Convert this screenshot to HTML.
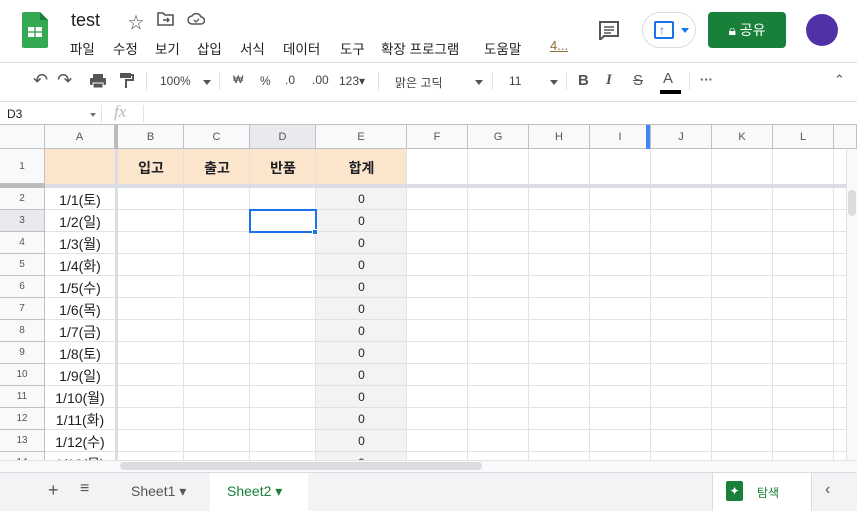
<!DOCTYPE html>
<html><head><meta charset="utf-8"><style>
*{box-sizing:border-box;margin:0;padding:0}
body{width:857px;height:511px;overflow:hidden;background:#fff;font-family:"Liberation Sans","Noto Sans CJK KR",sans-serif;position:relative;color:#202124}
.a{position:absolute}
.m{position:absolute;top:38px;font-size:13.5px;white-space:nowrap}
.tb{color:#444;font-size:12px}
.vl{position:absolute;width:1px;background:#e2e2e2}
.hl{position:absolute;height:1px;background:#e2e2e2}
.ch{position:absolute;top:125px;height:24px;font-size:11px;color:#555;text-align:center;line-height:24px;background:#f8f9fa;border-right:1px solid #c0c0c0;border-bottom:1px solid #c0c0c0}
.rh{position:absolute;left:0;width:45px;font-size:10px;color:#555;text-align:center;background:#f8f9fa;border-right:1px solid #c0c0c0;border-bottom:1px solid #c0c0c0}
.cell{position:absolute;font-size:14px;text-align:center}
</style></head><body>
<svg class="a" style="left:22px;top:12px" width="26" height="36" viewBox="0 0 26 36"><path d="M2 0h16l8 8v26a2 2 0 0 1-2 2H2a2 2 0 0 1-2-2V2a2 2 0 0 1 2-2z" fill="#34a853"/><path d="M18 0v8h8z" fill="#188038"/><rect x="6" y="15" width="14" height="10" fill="#fff"/><rect x="12.3" y="15" width="1.4" height="10" fill="#34a853"/><rect x="6" y="19.3" width="14" height="1.4" fill="#34a853"/></svg>
<div class="a" style="left:71px;top:10px;font-size:18px">test</div>
<div class="a" style="left:128px;top:9px;font-size:16px;color:#555">☆</div>
<svg class="a" style="left:157px;top:12px" width="18" height="14"><path d="M1 1h5l2 2h8v10H1z" fill="none" stroke="#555" stroke-width="1.6"/><path d="M6 8h6M10 6l2 2-2 2" stroke="#555" stroke-width="1.4" fill="none"/></svg>
<svg class="a" style="left:187px;top:12px" width="18" height="14"><path d="M5 12a4 4 0 0 1 0-8 5 5 0 0 1 9 1 3.5 3.5 0 0 1 0 7z" fill="none" stroke="#555" stroke-width="1.5"/><path d="M7 8l2 2 3-3" stroke="#555" stroke-width="1.3" fill="none"/></svg>
<div class="m" style="left:70px">파일</div><div class="m" style="left:113px">수정</div><div class="m" style="left:155px">보기</div><div class="m" style="left:197px">삽입</div><div class="m" style="left:240px">서식</div><div class="m" style="left:283px">데이터</div><div class="m" style="left:340px">도구</div><div class="m" style="left:381px">확장 프로그램</div><div class="m" style="left:484px">도움말</div><div class="m" style="left:550px;color:#8a6d3b;text-decoration:underline;font-size:13px">4...</div>
<svg class="a" style="left:598px;top:20px" width="22" height="20"><path d="M2 2h18v14H6l-4 4z" fill="none" stroke="#555" stroke-width="2"/><path d="M6 7h10M6 10h10M6 13h7" stroke="#555" stroke-width="1.5"/></svg>
<div class="a" style="left:642px;top:12px;width:54px;height:36px;border:1px solid #dadce0;border-radius:18px"></div>
<div class="a" style="left:654px;top:21px;width:20px;height:18px;border:2px solid #1a73e8;border-radius:2px"></div>
<div class="a" style="left:659px;top:23px;color:#1a73e8;font-size:12px;font-weight:bold">↑</div>
<div class="a" style="left:681px;top:28px;width:0;height:0;border-left:4px solid transparent;border-right:4px solid transparent;border-top:5px solid #1a73e8"></div>
<div class="a" style="left:708px;top:12px;width:78px;height:36px;background:#188038;border-radius:4px;color:#fff;font-size:14px;line-height:36px;text-align:center">🔒︎ 공유</div>
<div class="a" style="left:806px;top:14px;width:32px;height:32px;border-radius:50%;background:#5130a8"></div>
<div class="hl" style="left:0;top:62px;width:857px;background:#dadce0"></div>
<div class="a tb" style="left:33px;top:70px;font-size:18px;color:#555;letter-spacing:9px">↶↷</div>
<svg class="a" style="left:90px;top:74px" width="16" height="14"><rect x="3" y="0" width="10" height="4" fill="#555"/><rect x="0" y="4" width="16" height="7" rx="1" fill="#555"/><rect x="3" y="9" width="10" height="5" fill="#555" stroke="#fff"/></svg>
<svg class="a" style="left:120px;top:73px" width="14" height="16"><rect x="0" y="0" width="11" height="5" fill="#555"/><path d="M11 2h2v5H6v8" stroke="#555" stroke-width="2" fill="none"/></svg>
<div class="vl" style="left:146px;top:72px;height:18px"></div>
<div class="a tb" style="left:160px;top:74px">100%</div>
<div class="a" style="left:203px;top:80px;border-left:4px solid transparent;border-right:4px solid transparent;border-top:5px solid #555"></div>
<div class="vl" style="left:219px;top:72px;height:18px"></div>
<div class="a tb" style="left:233px;top:74px;font-size:11px">₩</div>
<div class="a tb" style="left:260px;top:74px">%</div>
<div class="a tb" style="left:285px;top:73px">.0</div>
<div class="a tb" style="left:312px;top:73px">.00</div>
<div class="a tb" style="left:339px;top:74px">123▾</div>
<div class="vl" style="left:378px;top:72px;height:18px"></div>
<div class="a tb" style="left:395px;top:74px">맑은 고딕</div>
<div class="a" style="left:475px;top:80px;border-left:4px solid transparent;border-right:4px solid transparent;border-top:5px solid #555"></div>
<div class="vl" style="left:492px;top:72px;height:18px"></div>
<div class="a tb" style="left:509px;top:74px">11</div>
<div class="a" style="left:550px;top:80px;border-left:4px solid transparent;border-right:4px solid transparent;border-top:5px solid #555"></div>
<div class="vl" style="left:566px;top:72px;height:18px"></div>
<div class="a" style="left:578px;top:72px;font-size:15px;font-weight:bold;color:#555">B</div>
<div class="a" style="left:606px;top:72px;font-size:15px;font-style:italic;font-family:'Liberation Serif',serif;font-weight:bold;color:#555">I</div>
<div class="a" style="left:633px;top:72px;font-size:15px;text-decoration:line-through;color:#555">S</div>
<div class="a" style="left:663px;top:70px;font-size:15px;color:#555">A</div>
<div class="a" style="left:660px;top:90px;width:21px;height:4px;background:#000"></div>
<div class="vl" style="left:689px;top:72px;height:18px"></div>
<div class="a" style="left:700px;top:72px;font-size:13px;color:#555;font-weight:bold">···</div>
<div class="a" style="left:834px;top:72px;font-size:13px;color:#555">⌃</div>
<div class="hl" style="left:0;top:101px;width:857px;background:#dadce0"></div>
<div class="a" style="left:7px;top:107px;font-size:12px">D3</div>
<div class="a" style="left:90px;top:113px;border-left:3px solid transparent;border-right:3px solid transparent;border-top:4px solid #777"></div>
<div class="vl" style="left:101px;top:105px;height:18px"></div>
<div class="a" style="left:114px;top:102px;font-size:17px;font-style:italic;color:#bbb;font-family:'Liberation Serif',serif">fx</div>
<div class="vl" style="left:143px;top:105px;height:18px"></div>
<div class="hl" style="left:0;top:124px;width:857px;background:#c0c0c0"></div>
<div class="a" style="left:45px;top:149px;width:362px;height:35px;background:#fce5cd"></div>
<div class="a" style="left:316px;top:188px;width:91px;height:272px;background:#f3f3f3"></div>
<div class="vl" style="left:183px;top:149px;height:311px"></div>
<div class="vl" style="left:249px;top:149px;height:311px"></div>
<div class="vl" style="left:315px;top:149px;height:311px"></div>
<div class="vl" style="left:406px;top:149px;height:311px"></div>
<div class="vl" style="left:467px;top:149px;height:311px"></div>
<div class="vl" style="left:528px;top:149px;height:311px"></div>
<div class="vl" style="left:589px;top:149px;height:311px"></div>
<div class="vl" style="left:650px;top:149px;height:311px"></div>
<div class="vl" style="left:711px;top:149px;height:311px"></div>
<div class="vl" style="left:772px;top:149px;height:311px"></div>
<div class="vl" style="left:833px;top:149px;height:311px"></div>
<div id="rows"></div>
<div class="ch" style="left:0;width:45px"></div>
<div class="ch" style="left:45px;width:70px">A</div>
<div class="ch" style="left:118px;width:66px">B</div>
<div class="ch" style="left:184px;width:66px">C</div>
<div class="ch" style="left:250px;width:66px;background:#e8eaed">D</div>
<div class="ch" style="left:316px;width:91px">E</div>
<div class="ch" style="left:407px;width:61px">F</div>
<div class="ch" style="left:468px;width:61px">G</div>
<div class="ch" style="left:529px;width:61px">H</div>
<div class="ch" style="left:590px;width:61px">I</div>
<div class="ch" style="left:651px;width:61px">J</div>
<div class="ch" style="left:712px;width:61px">K</div>
<div class="ch" style="left:773px;width:61px">L</div>
<div class="ch" style="left:834px;width:23px"></div>
<div class="a" style="left:646px;top:125px;width:4px;height:24px;background:#4285f4"></div>
<div class="a" style="left:115px;top:125px;width:3px;height:335px;background:#dadce6"></div>
<div class="a" style="left:115px;top:125px;width:3px;height:24px;background:#bbb"></div>
<div class="a" style="left:0;top:184px;width:846px;height:4px;background:#dadce6"></div>
<div class="a" style="left:0;top:184px;width:45px;height:4px;background:#bbb"></div>
<div class="rh" style="top:149px;height:35px;line-height:35px">1</div>
<div class="cell" style="left:118px;top:158px;width:66px;font-weight:bold">입고</div>
<div class="cell" style="left:184px;top:158px;width:66px;font-weight:bold">출고</div>
<div class="cell" style="left:250px;top:158px;width:66px;font-weight:bold">반품</div>
<div class="cell" style="left:316px;top:158px;width:91px;font-weight:bold">합계</div>
<script>
var d=['토','일','월','화','수','목','금','토','일','월','화','수','목'];var h='';
for(var i=0;i<13;i++){var t=188+i*22;
h+='<div class="hl" style="left:45px;top:'+(t+21)+'px;width:801px"></div>';
h+='<div class="rh" style="top:'+t+'px;height:22px;line-height:22px;'+(i==1?'background:#e8eaed':'')+'">'+(i+2)+'</div>';
h+='<div class="cell" style="left:45px;top:'+(t+2)+'px;width:70px">1/'+(i+1)+'('+d[i]+')</div>';
h+='<div class="cell" style="left:316px;top:'+(t+4)+'px;width:91px;font-size:12px">0</div>';}
document.getElementById('rows').innerHTML=h;
</script>
<div class="a" style="left:249px;top:209px;width:68px;height:24px;border:2px solid #1a73e8"></div>
<div class="a" style="left:312px;top:229px;width:6px;height:6px;background:#1a73e8;border:1px solid #fff"></div>
<div class="a" style="left:846px;top:149px;width:11px;height:311px;background:#f8f9fa;border-left:1px solid #e2e2e2"></div>
<div class="a" style="left:848px;top:190px;width:8px;height:26px;background:#dadce0;border-radius:4px"></div>
<div class="a" style="left:0;top:460px;width:857px;height:12px;background:#f8f9fa;border-top:1px solid #e2e2e2"></div>
<div class="a" style="left:120px;top:462px;width:362px;height:8px;background:#dadce0;border-radius:4px"></div>
<div class="a" style="left:0;top:472px;width:857px;height:39px;background:#f1f3f4;border-top:1px solid #dadce0"></div>
<div class="a" style="left:48px;top:480px;font-size:18px;color:#555">+</div>
<div class="a" style="left:80px;top:480px;font-size:16px;color:#555">≡</div>
<div class="a" style="left:131px;top:483px;font-size:14px;color:#555">Sheet1 ▾</div>
<div class="a" style="left:210px;top:473px;width:98px;height:38px;background:#fff"></div>
<div class="a" style="left:227px;top:483px;font-size:14px;color:#188038">Sheet2 ▾</div>
<div class="a" style="left:712px;top:473px;width:100px;height:38px;background:#fff;border-left:1px solid #dadce0;border-right:1px solid #dadce0"></div>
<div class="a" style="left:726px;top:481px;width:17px;height:20px;background:#188038;border-radius:2px;color:#fff;font-size:12px;text-align:center;line-height:20px">✦</div>
<div class="a" style="left:757px;top:484px;font-size:12px;color:#188038">탐색</div>
<div class="a" style="left:825px;top:481px;font-size:16px;color:#555">‹</div>
</body></html>
